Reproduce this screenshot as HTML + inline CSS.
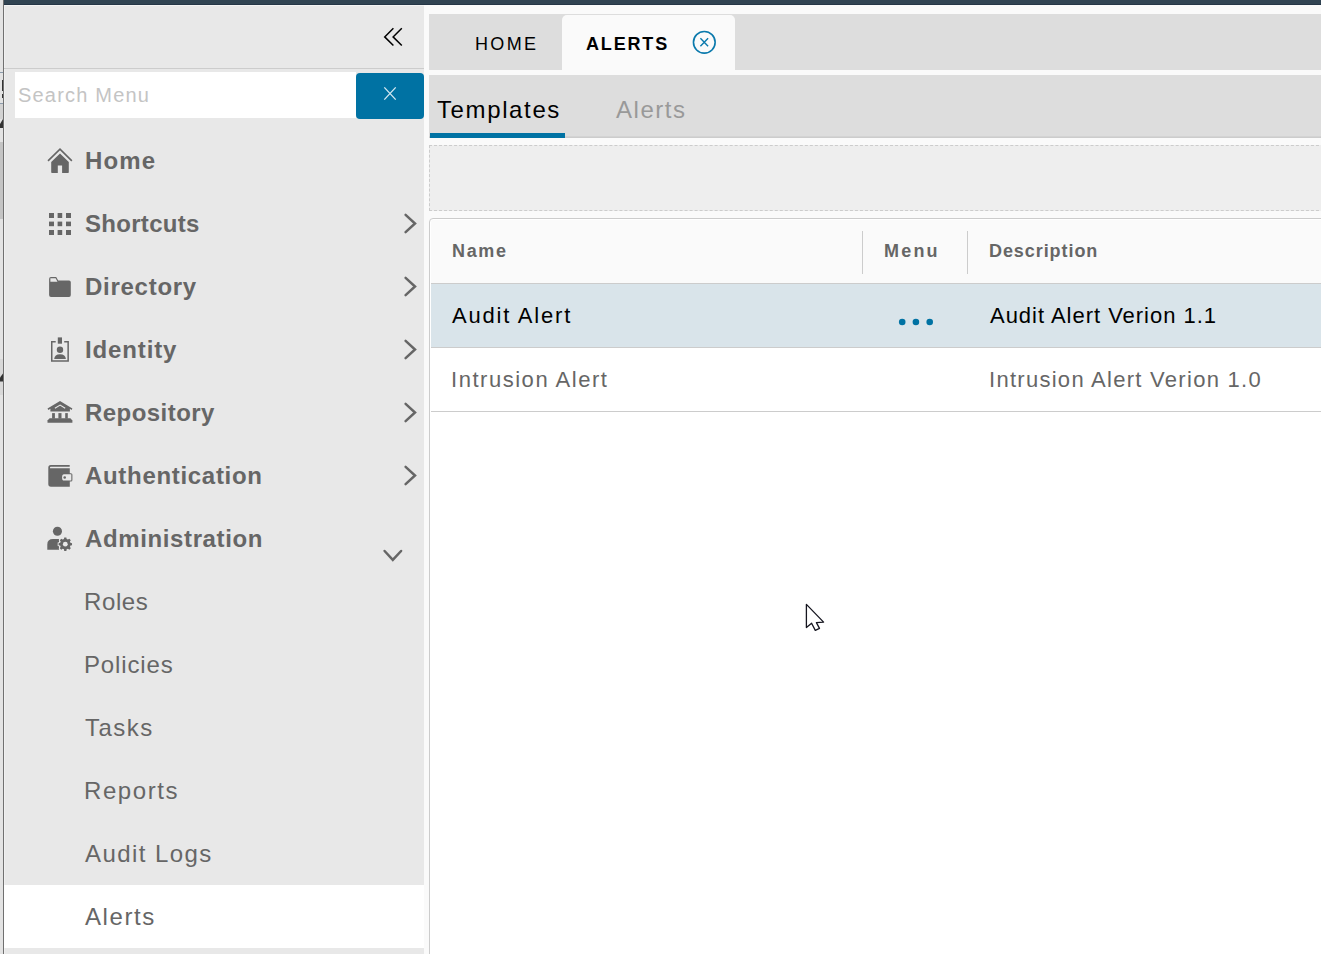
<!DOCTYPE html>
<html><head><meta charset="utf-8">
<style>
*{box-sizing:border-box}
html,body{margin:0;padding:0}
body{width:1321px;height:954px;overflow:hidden;position:relative;background:#fafafa;font-family:"Liberation Sans",sans-serif}
.a{position:absolute}
.t{position:absolute;white-space:nowrap;line-height:63px;height:63px}
.b{font-weight:bold;font-size:24px;color:#666}
.s{font-weight:normal;font-size:24px;color:#666}
</style></head><body>
<!-- left background strip -->
<div class="a" style="left:0;top:0;width:3px;height:954px;background:#e3e3e3"></div>
<div class="a" style="left:0;top:72px;width:3px;height:1px;background:#8a9aaa"></div>
<div class="a" style="left:2px;top:80px;width:1px;height:11px;background:#333"></div>
<div class="a" style="left:2px;top:94px;width:1px;height:4px;background:#333"></div>
<div class="a" style="left:0;top:103px;width:3px;height:1px;background:#8a9aaa"></div>
<div class="a" style="left:0;top:104px;width:3px;height:15px;background:#d2d2d2"></div>
<svg class="a" style="left:0;top:118px" width="3" height="10"><path d="M0 6 L3 1 V10 H0 Z" fill="#333"/></svg>
<div class="a" style="left:0;top:142px;width:3px;height:77px;background:#c4c4c4"></div>
<div class="a" style="left:0;top:359px;width:3px;height:36px;background:#d8d8d8"></div>
<svg class="a" style="left:0;top:373px" width="3" height="9"><path d="M0 4.5 L3 0.5 V8.6 H0 Z" fill="#333"/></svg>
<div class="a" style="left:3px;top:0;width:1px;height:954px;background:#707070"></div>
<!-- top bar -->
<div class="a" style="left:4px;top:0;width:1317px;height:5px;background:#314452"></div>
<div class="a" style="left:4px;top:4px;width:1317px;height:1px;background:#253646"></div>

<!-- sidebar -->
<div class="a" style="left:4px;top:5px;width:420px;height:949px;background:#e8e8e8"></div>
<div class="a" style="left:4px;top:5px;width:420px;height:1px;background:#f3f3f3"></div>
<div class="a" style="left:4px;top:5px;width:1px;height:949px;background:#f0f0f0"></div>
<div class="a" style="left:4px;top:68px;width:420px;height:1px;background:#ccc"></div>
<!-- search -->
<div class="a" style="left:15px;top:72px;width:341px;height:46px;background:#fff"></div>
<div class="t" style="left:18px;top:72px;height:46px;line-height:46px;font-size:20px;color:#c4c4c4;letter-spacing:1.2px">Search Menu</div>
<div class="a" style="left:356px;top:73px;width:68px;height:46px;background:#0072a3;border-radius:4px"></div>


<!-- menu items -->
<div class="t b" style="left:85px;top:129px;letter-spacing:1.17px">Home</div>
<div class="t b" style="left:85px;top:192px;letter-spacing:0.3px">Shortcuts</div>
<div class="t b" style="left:85px;top:255px;letter-spacing:0.73px">Directory</div>
<div class="t b" style="left:85px;top:318px;letter-spacing:0.86px">Identity</div>
<div class="t b" style="left:85px;top:381px;letter-spacing:0.45px">Repository</div>
<div class="t b" style="left:85px;top:444px;letter-spacing:0.69px">Authentication</div>
<div class="t b" style="left:85px;top:507px;letter-spacing:0.62px">Administration</div>
<div class="a" style="left:4px;top:885px;width:420px;height:63px;background:#fff"></div>
<div class="t s" style="left:84px;top:570px;letter-spacing:0.6px">Roles</div>
<div class="t s" style="left:84px;top:633px;letter-spacing:0.86px">Policies</div>
<div class="t s" style="left:85px;top:696px;letter-spacing:1.5px">Tasks</div>
<div class="t s" style="left:84px;top:759px;letter-spacing:1.58px">Reports</div>
<div class="t s" style="left:85px;top:822px;letter-spacing:1.44px">Audit Logs</div>
<div class="t s" style="left:85px;top:885px;letter-spacing:1.6px">Alerts</div>

<!-- content strip -->


<!-- main tabs -->
<div class="a" style="left:429px;top:14px;width:892px;height:56px;background:#ddd"></div>
<div class="a" style="left:562px;top:15px;width:173px;height:55px;background:#fafafa;border-radius:5px 5px 0 0"></div>
<div class="t" style="left:475px;top:16px;height:56px;line-height:56px;font-size:18px;color:#000;letter-spacing:2.33px">HOME</div>
<div class="t" style="left:586px;top:16px;height:56px;line-height:56px;font-size:18px;font-weight:bold;color:#000;letter-spacing:1.84px">ALERTS</div>


<!-- sub tabs -->
<div class="a" style="left:429px;top:75px;width:892px;height:63px;background:#ddd;border-bottom:1px solid #ccc"></div>
<div class="a" style="left:429px;top:136px;width:892px;height:1px;background:#d3d3d3"></div>
<div class="a" style="left:430px;top:133px;width:135px;height:5px;background:#0072a3"></div>
<div class="t" style="left:437px;top:78px;font-size:24px;color:#000;letter-spacing:1.62px">Templates</div>
<div class="t" style="left:616px;top:78px;font-size:24px;color:#999;letter-spacing:1.52px">Alerts</div>

<!-- dashed box -->
<div class="a" style="left:429px;top:145px;width:900px;height:66px;background:#eee;border:1px dashed #ccc"></div>

<!-- datagrid -->
<div class="a" style="left:429px;top:218px;width:900px;height:740px;border:1px solid #ccc;border-radius:4px;background:#fff"></div>
<div class="a" style="left:431px;top:220px;width:890px;height:63px;background:#fafafa;border-radius:2px 0 0 0"></div>
<div class="a" style="left:431px;top:283px;width:890px;height:1px;background:#ccc"></div>
<div class="a" style="left:862px;top:231px;width:1px;height:43px;background:#ccc"></div>
<div class="a" style="left:967px;top:231px;width:1px;height:43px;background:#ccc"></div>
<div class="t" style="left:452px;top:219px;height:64px;line-height:64px;font-size:18px;font-weight:bold;color:#666;letter-spacing:1.67px">Name</div>
<div class="t" style="left:884px;top:219px;height:64px;line-height:64px;font-size:18px;font-weight:bold;color:#666;letter-spacing:2.2px">Menu</div>
<div class="t" style="left:989px;top:219px;height:64px;line-height:64px;font-size:18px;font-weight:bold;color:#666;letter-spacing:0.93px">Description</div>

<div class="a" style="left:431px;top:284px;width:890px;height:63px;background:#d9e4ea"></div>
<div class="a" style="left:431px;top:347px;width:890px;height:1px;background:#ccc"></div>
<div class="a" style="left:431px;top:411px;width:890px;height:1px;background:#ccc"></div>
<div class="t" style="left:452px;top:284px;font-size:22px;color:#000;letter-spacing:1.8px">Audit Alert</div>
<div class="t" style="left:990px;top:284px;font-size:22px;color:#000;letter-spacing:0.98px">Audit Alert Verion 1.1</div>
<div class="t" style="left:451px;top:348px;font-size:22px;color:#666;letter-spacing:1.53px">Intrusion Alert</div>
<div class="t" style="left:989px;top:348px;font-size:22px;color:#666;letter-spacing:1.28px">Intrusion Alert Verion 1.0</div>
<svg class="a" style="left:896px;top:316px" width="40" height="12" viewBox="0 0 40 12">
<circle cx="6.2" cy="6" r="3.3" fill="#0072a3"/><circle cx="19.9" cy="6" r="3.3" fill="#0072a3"/><circle cx="33.7" cy="6" r="3.3" fill="#0072a3"/>
</svg>

<!-- icon overlay -->
<svg class="a" style="left:0;top:0" width="1321" height="954" viewBox="0 0 1321 954">
<path d="M393.4 28.2 L384.7 36.9 L393.4 45.5 M401.8 28.2 L393.1 36.9 L401.8 45.5" fill="none" stroke="#000" stroke-width="1.5"/>
<path d="M384.3 87.4 L395.7 99.6 M395.7 87.4 L384.3 99.6" stroke="#d6e9f2" stroke-width="1.3"/>
<circle cx="704.3" cy="42.3" r="10.85" fill="none" stroke="#0a79ac" stroke-width="1.6"/>
<path d="M700.4 38.3 L708.1 46.3 M708.1 38.3 L700.4 46.3" stroke="#0a79ac" stroke-width="1.4"/>
<g fill="#666">
<!-- home -->
<path d="M48 160.9 L60 149.2 L71.85 160.9" fill="none" stroke="#666" stroke-width="1.6"/>
<path d="M60 153.6 L51.2 162.1 V172.3 Q51.2 173 52 173 H57.8 V165.5 H62.1 V173 H68 Q68.8 173 68.8 172.3 V162.1 Z"/>
<!-- grid -->
<rect x="49" y="213" width="5" height="5"/><rect x="57.6" y="213" width="4.6" height="5"/><rect x="66" y="213" width="5" height="5"/>
<rect x="49" y="221.6" width="5" height="4.6"/><rect x="57.6" y="221.6" width="4.6" height="4.6"/><rect x="66" y="221.6" width="5" height="4.6"/>
<rect x="49" y="230" width="5" height="5"/><rect x="57.6" y="230" width="4.6" height="5"/><rect x="66" y="230" width="5" height="5"/>
<!-- folder -->
<path d="M49.1 279 Q49.1 277.1 51 277.1 H56.2 L58.2 280.4 H69 Q70.8 280.4 70.8 282.2 V295 Q70.8 296.9 69 296.9 H51 Q49.1 296.9 49.1 295 Z"/>
<path d="M50.4 278.3 H55.6 L57.5 281.7 H50.4 Z" fill="#e8e8e8"/>
<!-- identity -->
<path d="M55.7 341.75 H51.75 V361.05 H68.15 V341.75 H64.2" fill="none" stroke="#666" stroke-width="1.5"/>
<rect x="57.8" y="337.4" width="4.2" height="6.3"/>
<circle cx="60" cy="349.7" r="3.2"/>
<path d="M54.2 358.9 Q54.5 354.5 60 354.3 Q65.5 354.5 65.9 358.9 Z"/>
<!-- bank -->
<path d="M60 401 L47.5 408.6 L48.3 409.9 L50.4 408.7 V411.4 H69.9 V408.7 L71.6 409.9 L72.4 408.6 Z"/>
<path d="M54.9 408.2 L60.1 405.1 L65.2 408.2" fill="none" stroke="#e8e8e8" stroke-width="1.1"/>
<rect x="52.1" y="413.1" width="2.8" height="5.5"/><rect x="58.4" y="413.1" width="3.1" height="5.5"/><rect x="65.2" y="413.1" width="2.6" height="5.5"/>
<path d="M49.6 418.2 H70.4 L72.4 420.5 V422.7 H47.5 V420.5 Z"/>
<!-- wallet -->
<path d="M48.3 467.5 Q48.3 465 50.8 465 H69.7 V466.7 H50.8 Q50 466.7 50 467.6 V468.3 H69.8 V486.7 H51 Q48.3 486.7 48.3 484 Z"/>
<rect x="61" y="473.2" width="11.4" height="8.4" rx="1.5"/>
<path d="M64 474.2 H71.3 V480.6 H64 Q62.1 480.6 62.1 477.4 Q62.1 474.2 64 474.2 Z" fill="#e8e8e8"/>
<circle cx="64.7" cy="477.5" r="1.3"/>
<!-- admin -->
<circle cx="57.45" cy="531.25" r="4.55"/>
<path d="M47.3 549.7 V544.5 Q47.3 539 53 539 H59 V549.7 Z"/>
<path d="M70.42 542.83 L72.02 543.14 L72.02 545.26 L70.42 545.57 L70.20 546.23 L69.89 546.85 L70.80 548.20 L69.30 549.70 L67.95 548.79 L67.33 549.10 L66.67 549.32 L66.36 550.92 L64.24 550.92 L63.93 549.32 L63.27 549.10 L62.65 548.79 L61.30 549.70 L59.80 548.20 L60.71 546.85 L60.40 546.23 L60.18 545.57 L58.58 545.26 L58.58 543.14 L60.18 542.83 L60.40 542.17 L60.71 541.55 L59.80 540.20 L61.30 538.70 L62.65 539.61 L63.27 539.30 L63.93 539.08 L64.24 537.48 L66.36 537.48 L66.67 539.08 L67.33 539.30 L67.95 539.61 L69.30 538.70 L70.80 540.20 L69.89 541.55 L70.20 542.17 Z" stroke="#e8e8e8" stroke-width="1.8" paint-order="stroke"/>
<circle cx="65.3" cy="544.2" r="2.4" fill="#e8e8e8"/>
</g>
<g fill="none" stroke="#666" stroke-width="2.5" stroke-linecap="round" stroke-linejoin="miter">
<path d="M405.6 214.9 L415 223.5 L405.6 232.1"/>
<path d="M405.6 277.9 L415 286.5 L405.6 295.1"/>
<path d="M405.6 340.9 L415 349.5 L405.6 358.1"/>
<path d="M405.6 403.9 L415 412.5 L405.6 421.1"/>
<path d="M405.6 466.9 L415 475.5 L405.6 484.1"/>
<path d="M384.6 551 L392.8 559.9 L401.1 551"/>
</g>
</svg>
<!-- cursor -->
<svg class="a" style="left:800px;top:600px" width="30" height="36" viewBox="0 0 30 36">
<path d="M6.4 4.4 L6.4 27.6 L11.6 23.2 L15.3 30.4 L19.5 28.4 L16.4 22.6 L23.6 22.1 Z" fill="#fff" stroke="#15151f" stroke-width="1.3" stroke-linejoin="round"/>
</svg>
</body></html>
